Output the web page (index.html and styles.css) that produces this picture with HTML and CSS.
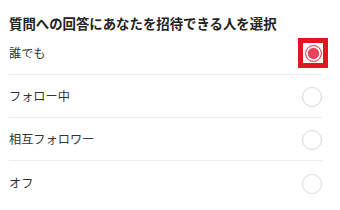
FILE: index.html
```html
<!DOCTYPE html>
<html lang="ja">
<head>
  <meta charset="UTF-8">
  <meta name="viewport" content="width=device-width, initial-scale=1.0">
  <title>質問への回答</title>
  <link rel="stylesheet" href="styles.css">
</head>
<body>
  <div class="panel">
    <h3 class="title">質問への回答にあなたを招待できる人を選択</h3>

    <!-- Options -->
    <ul class="options">
      <li class="option">
        <span class="label">誰でも</span>
        <span class="radio selected"><span class="dot"></span></span>
      </li>
      <li class="option">
        <span class="label">フォロー中</span>
        <span class="radio"></span>
      </li>
      <li class="option">
        <span class="label">相互フォロワー</span>
        <span class="radio"></span>
      </li>
      <li class="option">
        <span class="label">オフ</span>
        <span class="radio"></span>
      </li>
    </ul>
  </div>
</body>
</html>
```

FILE: styles.css
```css
/* General Styles */
* {
  margin: 0;
  padding: 0;
  box-sizing: border-box;
}

body {
  font-family: "Noto Sans CJK JP", "Noto Sans", sans-serif;
  background-color: #fff;
  color: #333;
}

.panel {
  width: 340px;
  height: 210px;
  padding: 0 18px 0 9px;
  overflow: hidden;
}

.title {
  height: 32px;
  padding-top: 15px;
  font-size: 13.4px;
  line-height: 16px;
  font-weight: bold;
  color: #222;
  white-space: nowrap;
}

.options {
  list-style: none;
}

.option {
  display: flex;
  align-items: center;
  justify-content: space-between;
  height: 43px;
  border-bottom: 1px solid #ececec;
  font-size: 12.2px;
  line-height: 16px;
}

.option:last-child {
  border-bottom: none;
}

.radio {
  width: 20px;
  height: 20px;
  border: 1px solid #d6d6d6;
  border-radius: 50%;
  margin-top: 2px;
}

.radio.selected {
  display: flex;
  align-items: center;
  justify-content: center;
  border: none;
  border-radius: 0;
  margin-top: 0;
  margin-right: -1px;
  outline: 5px solid #e3151f;
}

.dot {
  width: 17px;
  height: 17px;
  border-radius: 50%;
  background: #e8455d;
  border: 1.5px solid #e8455d;
  box-shadow: inset 0 0 0 1.8px #fff;
}
```
